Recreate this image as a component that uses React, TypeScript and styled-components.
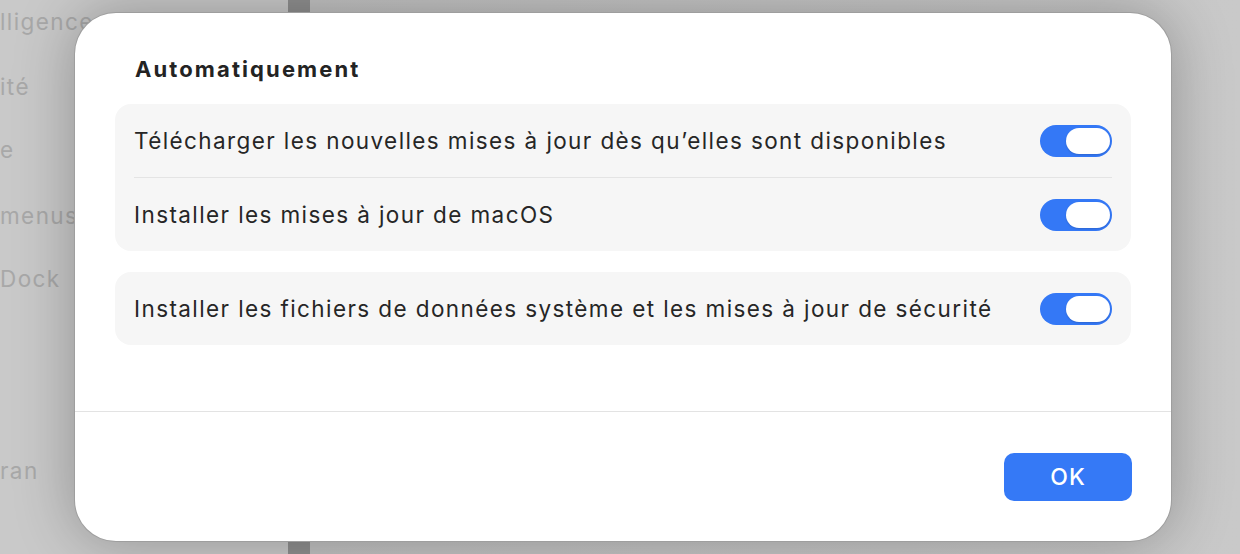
import styled, { createGlobalStyle } from "styled-components";

const GlobalStyle = createGlobalStyle`
  html, body {
    margin: 0;
    padding: 0;
    background: #c6c6c6;
  }
  * {
    box-sizing: border-box;
  }
`;

const Page = styled.div`
  position: relative;
  display: flex;
  width: 1240px;
  height: 554px;
  overflow: hidden;
  font-family: Inter, "Noto Sans", sans-serif;
`;

const Sidebar = styled.div`
  display: flex;
  flex-direction: column;
  width: 288px;
  padding-top: 6px;
  background: #c9c9c9;
`;

const SidebarItem = styled.div<{ $gap: number }>`
  margin-top: ${(p) => p.$gap}px;
  height: 32px;
  font-size: 22.5px;
  line-height: 32px;
  letter-spacing: 1.4px;
  color: #a8a8a8;
  white-space: nowrap;
`;

const Splitter = styled.div`
  width: 22px;
  background: #8f8f8f;
`;

const Main = styled.div`
  flex: 1;
  background: linear-gradient(90deg, #c1c1c1, #c9c9c9);
`;

const Dialog = styled.div`
  position: absolute;
  left: 74px;
  top: 12px;
  width: 1098px;
  height: 530px;
  display: flex;
  flex-direction: column;
  background: #ffffff;
  border: 1px solid rgba(0, 0, 0, 0.38);
  border-radius: 42px;
  box-shadow: 0 0 60px rgba(0, 0, 0, 0.28);
  color: #262626;
`;

const Content = styled.div`
  flex: 1;
  padding: 0 40px;
`;

const Title = styled.h2`
  margin: 43px 0 0 20px;
  font-size: 22px;
  font-weight: 700;
  line-height: 26px;
  letter-spacing: 2.1px;
  color: #232323;
`;

const Group = styled.div<{ $top: number }>`
  margin-top: ${(p) => p.$top}px;
  padding: 0 19px;
  background: #f6f6f6;
  border-radius: 16px;
`;

const Row = styled.div<{ $divider?: boolean }>`
  display: flex;
  align-items: center;
  justify-content: space-between;
  height: ${(p) => (p.$divider ? 74 : 73)}px;
  border-bottom: ${(p) => (p.$divider ? "1.5px solid #e4e4e4" : "none")};
  font-size: 22.5px;
  letter-spacing: 1.4px;
`;

const Toggle = styled.div`
  position: relative;
  width: 72px;
  height: 32px;
  border-radius: 16px;
  background: #3478f6;
`;

const Knob = styled.div`
  position: absolute;
  right: 2px;
  top: 3px;
  width: 44px;
  height: 26px;
  border-radius: 13px;
  background: #ffffff;
  box-shadow: 0 1px 2px rgba(0, 0, 0, 0.15);
`;

const Separator = styled.div`
  height: 1.5px;
  background: #e3e3e3;
`;

const Footer = styled.div`
  display: flex;
  justify-content: flex-end;
  height: 129px;
  padding: 41px 39px 0 0;
`;

const Button = styled.button`
  width: 128px;
  height: 48px;
  border: none;
  border-radius: 10px;
  background: #3579f6;
  color: #ffffff;
  font-family: Inter, "Noto Sans", sans-serif;
  font-size: 23px;
  font-weight: 500;
  letter-spacing: 1px;
`;

const Switch = () => (
  <Toggle>
    <Knob />
  </Toggle>
);

const sidebar = [
  { label: "lligence", gap: 0 },
  { label: "ité", gap: 33 },
  { label: "e", gap: 31 },
  { label: "menus", gap: 34 },
  { label: "Dock", gap: 31 },
  { label: "ran", gap: 160 },
];

export default function App() {
  return (
    <>
      <GlobalStyle />
      <Page>
        <Sidebar>
          {sidebar.map((s) => (
            <SidebarItem key={s.label} $gap={s.gap}>
              {s.label}
            </SidebarItem>
          ))}
        </Sidebar>
        <Splitter />
        <Main />
        <Dialog>
          <Content>
            <Title>Automatiquement</Title>
            <Group $top={22}>
              <Row $divider>
                <span>Télécharger les nouvelles mises à jour dès qu’elles sont disponibles</span>
                <Switch />
              </Row>
              <Row>
                <span>Installer les mises à jour de macOS</span>
                <Switch />
              </Row>
            </Group>
            <Group $top={21}>
              <Row>
                <span>Installer les fichiers de données système et les mises à jour de sécurité</span>
                <Switch />
              </Row>
            </Group>
          </Content>
          <Separator />
          <Footer>
            <Button>OK</Button>
          </Footer>
        </Dialog>
      </Page>
    </>
  );
}
